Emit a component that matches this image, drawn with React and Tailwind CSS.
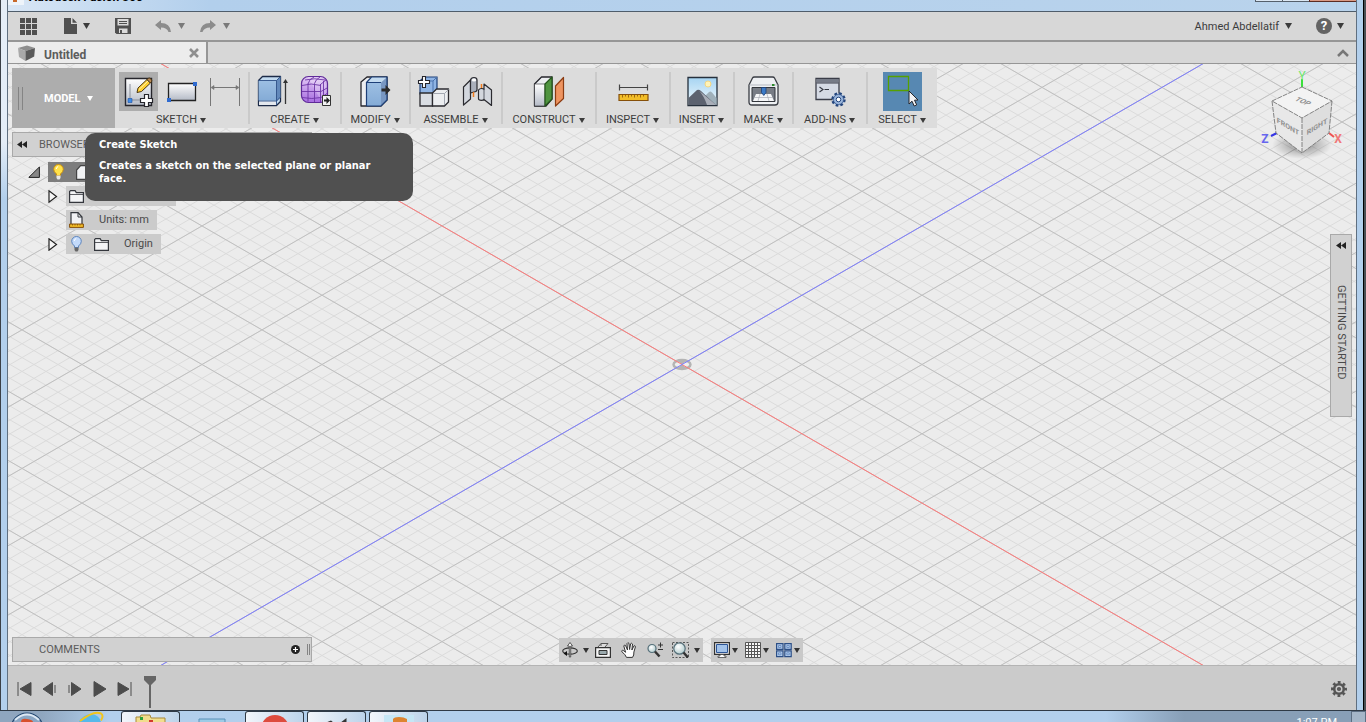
import { useState } from 'react'

const SLOPE = 34.641 / 60

const gridPath = (gap, count) => {
  let d = ''
  for (let k = -count; k <= count; k++) {
    const y = k * gap
    d += `M-1400 ${y - 1400 * SLOPE}L1400 ${y + 1400 * SLOPE}`
    d += `M-1400 ${y + 1400 * SLOPE}L1400 ${y - 1400 * SLOPE}`
  }
  return d
}

const minorGrid = gridPath(13.8564, 90)
const majorGrid = gridPath(69.282, 18)

const Caret = ({ className = 'w-[6px] h-[5px] text-[#3c3c3c]' }) => (
  <svg className={`shrink-0 ${className}`} viewBox="0 0 6 5" fill="currentColor">
    <path d="M0 0h6L3 5z" />
  </svg>
)

const Gradients = () => (
  <svg className="absolute w-0 h-0" aria-hidden="true">
    <defs>
      <linearGradient id="sheet" x1="0" y1="0" x2="0" y2="1">
        <stop offset="0" stopColor="#ffffff" />
        <stop offset="1" stopColor="#b4bac6" />
      </linearGradient>
      <linearGradient id="steel" x1="0" y1="0" x2="0" y2="1">
        <stop offset="0" stopColor="#9dbfe3" />
        <stop offset="1" stopColor="#84abd6" />
      </linearGradient>
      <linearGradient id="purple" x1="0" y1="0" x2="0" y2="1">
        <stop offset="0" stopColor="#e2c9f5" />
        <stop offset="1" stopColor="#a76ce0" />
      </linearGradient>
      <linearGradient id="sky" x1="0" y1="0" x2="0" y2="1">
        <stop offset="0" stopColor="#a6d4f2" />
        <stop offset="1" stopColor="#f2fafe" />
      </linearGradient>
      <radialGradient id="lens" cx=".4" cy=".35" r=".7">
        <stop offset="0" stopColor="#ffffff" />
        <stop offset="1" stopColor="#aec9cb" />
      </radialGradient>
    </defs>
  </svg>
)

/* toolbar drawings, all on a 39x39 tile */
const icons = {
  sketch: (
    <>
      <path d="M6.500 6.500h26v27h-26z" fill="url(#sheet)" stroke="#26262c" strokeWidth="1.400" />
      <path d="M11 12v16h14" fill="none" stroke="#8a8f99" />
      <path d="M9 26.500h4v4H9z" fill="#3d8be8" stroke="#1d4fa0" strokeWidth=".6" />
      <path d="M18 20.500l1-4.500 9-8.500 3.500 3.500-9 8.500z" fill="#ffd032" stroke="#4a3410" />
      <path d="M28 7.500l1.500-1.200q1-.6 1.800.2l1.300 1.500q.6 1-.2 1.800l-1 1.200z" fill="#b98a58" stroke="#4a3410" />
      <path d="M20 17.500l9-8.500" stroke="#fff3b0" />
      <path d="M25.500 22.500h4v4h4v4h-4v4h-4v-4h-4v-4h4z" fill="#fff" stroke="#26262c" strokeWidth="1.200" />
    </>
  ),
  rectangle: (
    <>
      <path d="M6.500 11.500h27v17h-27z" fill="url(#sheet)" stroke="#222" strokeWidth="1.300" />
      <path d="M31 10h4v4h-4zM5 26h4v4H5z" fill="#2f6bd0" />
    </>
  ),
  dimension: (
    <g stroke="#777" fill="#777">
      <path d="M5.500 6v28M34.500 6v28M7 15.500h26" />
      <path d="M6 15.500l3-2v4zM34 15.500l-3-2v4z" strokeWidth=".6" />
    </g>
  ),
  extrude: (
    <>
      <path d="M4.500 8.500l4-4h18v25l-4 4h-18z" fill="#c3dbf0" stroke="#1d2b48" strokeWidth="1.300" strokeLinejoin="round" />
      <path d="M4.500 8.500h18v20h-18z" fill="url(#steel)" />
      <path d="M22.500 8.500l4-4v21l-4 4z" fill="#6389bb" />
      <path d="M5 29h17.500v4H5z" fill="#e4e8ee" />
      <path d="M4.500 8.500h18v24.500M22.500 8.500l4-4M5 29h17.500l4-4" fill="none" stroke="#2e4f86" strokeWidth=".9" />
      <path d="M31.500 9v23" stroke="#333" strokeWidth="1.300" />
      <path d="M31.500 7l-2.500 4h5z" fill="#333" />
    </>
  ),
  form: (
    <>
      <rect x="4.500" y="4.500" width="26" height="26" rx="7" fill="url(#purple)" stroke="#5f2b98" strokeWidth="1.200" />
      <path d="M11 5.500q4 0 12 .5q6 4 6.500 9v10l-5 4.500" fill="#fff" opacity=".25" />
      <path d="M5 13.500q9-3 19 0M5 19.500h19M5 25.500q10 2 19 0M11 11.500v18M17.500 11.500v18.500M23.500 12v18M11 12q1-5 6-7M17.500 11.500q1-4 5.500-6.500M23.500 12.500l6-5M24 19.500l6-3.500M24 25.500l6-4M26.500 9v18M8 8q9-2.500 20 0" fill="none" stroke="#6d35a6" strokeWidth=".9" />
      <path d="M25.500 23.500h8v10h-8z" fill="#f2f2f2" stroke="#333" />
      <path d="M27 27.500h2.500V25l3.500 3.500-3.500 3.500v-2.500H27z" fill="#222" />
    </>
  ),
  pressPull: (
    <>
      <path d="M5 10l6-5h20v23l-6 6H5z" fill="#eceef1" stroke="#26262c" strokeWidth="1.300" strokeLinejoin="round" />
      <path d="M10.500 10.500l5-5.500H31l-6 5.500z" fill="#c3dbf0" />
      <path d="M10.500 10.500H25V34H10.500z" fill="url(#steel)" />
      <path d="M25 10.500L31 5v23l-6 6z" fill="#7897c2" />
      <path d="M10.500 34V10.500H25M10.500 10.500l5-5.500H31v23l-6 6H10.500" fill="none" stroke="#1d3f78" strokeWidth="1.200" />
      <path d="M25.500 16.500h4v-3.500l5 5-5 5v-3.500h-4z" fill="#2b2b2b" />
    </>
  ),
  component: (
    <>
      <path d="M5 9l4-4h13v13l-4 4H5z" fill="#8fb4e4" stroke="#1d3f78" strokeWidth="1.200" />
      <path d="M5 9h13v12M18 9l4-4" fill="none" stroke="#4b72ad" />
      <path d="M5 21h12.500v13H5z" fill="#d9dde3" stroke="#2b2b30" strokeWidth="1.300" />
      <path d="M17.500 21l4-4H33.500v13l-4 4h-12z" fill="#eceef1" stroke="#2b2b30" strokeWidth="1.300" strokeLinejoin="round" />
      <path d="M18 21.500h11.500V33M29.500 21.500l4-4" fill="none" stroke="#a3a8b2" />
      <path d="M7.500 4.500h3v4h4v3h-4v4h-3v-4h-4v-3h4z" fill="#fff" stroke="#26262c" strokeWidth="1.100" />
    </>
  ),
  joint: (
    <g strokeLinejoin="round">
      <path d="M5.500 15l7-7v19l-7 6z" fill="#d3d7de" stroke="#2b2b30" strokeWidth="1.200" />
      <path d="M12.500 8q.5-2.500 3.500-2.500t3 2.500v10q-.5 2-3 2l-3.500 1z" fill="#aab0bb" stroke="#2b2b30" strokeWidth="1.200" />
      <ellipse cx="16" cy="8" rx="2.200" ry="1.500" fill="#fff" />
      <path d="M15.500 20v5M23.500 12v5" stroke="#f07b1d" strokeWidth="1.500" />
      <path d="M20.500 18q1-1.500 3-1.500t2.500 1V12l7.500 6v15.500L26 27.500q-.8.800-2.500.8-3 0-3-1.500z" fill="#d3d7de" stroke="#2b2b30" strokeWidth="1.200" />
      <path d="M26 17v10" stroke="#5a5f69" />
    </g>
  ),
  plane: (
    <g strokeLinejoin="round">
      <path d="M4.500 12l7-7H22v22l-6 7H4.500z" fill="#eceef1" stroke="#26262c" strokeWidth="1.300" />
      <path d="M4.500 12H15v22H4.500z" fill="url(#sheet)" stroke="#26262c" strokeWidth=".6" />
      <path d="M15 12l7-7v22l-7 7z" fill="#4f9440" stroke="#24551c" strokeWidth="1.200" />
      <path d="M25.500 14l8-8.500v21l-8 7.500z" fill="#ee9460" stroke="#8c3c12" strokeWidth="1.200" />
    </g>
  ),
  measure: (
    <>
      <path d="M5.500 12.500v6M33.500 12.500v6M5.500 15.500h28" stroke="#444" strokeWidth="1.200" />
      <path d="M5 22.500h29v6H5z" fill="#f2bd27" stroke="#86500a" strokeWidth="1.200" />
      <path d="M8.500 23v2.500M11.500 23v1.500M14.500 23v2.500M17.500 23v1.500M20.500 23v2.500M23.500 23v1.500M26.500 23v2.500M29.500 23v1.500" stroke="#86500a" strokeWidth=".8" />
    </>
  ),
  image: (
    <>
      <path d="M5 5.500h29v28H5z" fill="url(#sky)" stroke="#26303c" strokeWidth="1.300" />
      <circle cx="25" cy="12" r="3" fill="#fff3b8" stroke="#f3d683" />
      <path d="M20 26l6-6q1.500-1 3 .5L33.500 26v7H22z" fill="#9fb0ba" />
      <path d="M5.500 26L14 18q2-1 4 1l15 14H5.500z" fill="#5c626f" />
      <path d="M16 18.500L33 33h-9q-3-9-8-14.500z" fill="#a9aeb8" />
    </>
  ),
  print: (
    <>
      <path d="M5 13l3.500-7Q9 5 10.500 5h18q1.500 0 2 1L34 13v17q0 3-3 3H8q-3 0-3-3z" fill="#eef0f3" stroke="#3a3d44" strokeWidth="1.300" />
      <path d="M5.500 13h28" stroke="#b5b9c1" />
      <path d="M8 15.500h23v14H8z" fill="#777c85" stroke="#33363c" />
      <path d="M12 22h15l3 7H9z" fill="#f5f6f8" />
      <path d="M10 25.500h19M16 22l-2 7M23 22l2 7" stroke="#a9adb6" strokeWidth=".7" />
      <path d="M17.500 15.500h4.500v5l-2.200 3-2.300-3z" fill="#3b7bc8" stroke="#1d3f78" strokeWidth=".8" />
      <path d="M28 12h2.500v2H28z" fill="#2a8a2a" />
    </>
  ),
  scripts: (
    <>
      <path d="M5 6.500h23v21H5z" fill="#d5dae4" stroke="#3a3d48" strokeWidth="1.300" />
      <path d="M5.500 7h22v3.500h-22z" fill="#767b87" />
      <path d="M5.500 11h22" stroke="#3a3d48" />
      <path d="M8.500 15l3.500 2.500L8.500 20M13.500 17.500h4.500" fill="none" stroke="#33363f" strokeWidth="1.100" />
      <circle cx="27.500" cy="27.500" r="6" fill="#9cb7dd" stroke="#24457c" strokeWidth="2.400" strokeDasharray="2.600 2.100" />
      <circle cx="27.500" cy="27.500" r="5" fill="#9cb7dd" stroke="#24457c" strokeWidth=".6" />
      <circle cx="27.500" cy="27.500" r="2.300" fill="#fff" stroke="#24457c" />
    </>
  ),
  select: (
    <>
      <path d="M5.500 4.500h20v14h-20z" fill="none" stroke="#56a000" strokeWidth="1.300" />
      <path d="M26 19v13l3-2.800 2.200 4.800 2.500-1.100-2.200-4.700 3.500-.2z" fill="#f2f3f5" stroke="#26262c" strokeLinejoin="round" />
    </>
  ),
}

const groups = [
  { label: 'SKETCH', width: 'w-[135px]', tools: [['sketch', 'Create Sketch'], ['rectangle', 'Rectangle'], ['dimension', 'Dimension']] },
  { label: 'CREATE', width: 'w-[92px]', tools: [['extrude', 'Extrude'], ['form', 'Create Form']] },
  { label: 'MODIFY', width: 'w-[69px]', tools: [['pressPull', 'Press Pull']] },
  { label: 'ASSEMBLE', width: 'w-[92px]', tools: [['component', 'New Component'], ['joint', 'Joint']] },
  { label: 'CONSTRUCT', width: 'w-[94px]', tools: [['plane', 'Offset Plane']] },
  { label: 'INSPECT', width: 'w-[74px]', tools: [['measure', 'Measure']] },
  { label: 'INSERT', width: 'w-[64px]', tools: [['image', 'Insert Image']] },
  { label: 'MAKE', width: 'w-[59px]', tools: [['print', '3D Print']] },
  { label: 'ADD-INS', width: 'w-[74px]', tools: [['scripts', 'Scripts']] },
  { label: 'SELECT', width: 'w-[69px]', tools: [['select', 'Select']] },
]

function TitleBar() {
  return (
    <div className="h-[11px] flex items-start justify-between overflow-hidden bg-linear-to-r from-[#d8e6f5] via-[#b2cfec] via-15% to-[#b9d3ec]">
      <div className="flex items-start">
        <svg className="w-4 h-[5px]" viewBox="0 0 16 5">
          <path d="M0 0h16v5H0z" fill="#eef4fa" />
          <path d="M5 0h4v2H5z" fill="#c8692a" />
        </svg>
        <span className="-mt-[11px] ml-[5px] text-[12px] leading-4 font-bold text-black">Autodesk Fusion 360</span>
      </div>
      <div className="flex">
        <span className="w-[27px] h-[2px] border-b border-l border-[#55606c] bg-[#dce8f4]" />
        <span className="w-[27px] h-[2px] border-b border-l border-[#55606c] bg-[#dce8f4]" />
        <span className="w-[47px] h-[2px] border-b border-l border-[#5c2c22] bg-[#d99a86]" />
      </div>
    </div>
  )
}

function AppBar() {
  return (
    <header className="h-[31px] flex items-center justify-between border-t border-[#4f5d6b] border-b-2 border-b-[#969696] bg-[#d7d7d7] px-3">
      <div className="flex items-center text-[#505050]">
        <button type="button" aria-label="Data Panel">
          <svg className="w-[17px] h-[17px]" viewBox="0 0 17 17" fill="currentColor">
            <path d="M0 0h5v5H0zM6 0h5v5H6zM12 0h5v5h-5zM0 6h5v5H0zM6 6h5v5H6zM12 6h5v5h-5zM0 12h5v5H0zM6 12h5v5H6zM12 12h5v5h-5z" />
          </svg>
        </button>
        <button type="button" aria-label="File" className="ml-[27px] flex items-center gap-[6px]">
          <svg className="w-[13px] h-4" viewBox="0 0 13 16" fill="currentColor">
            <path d="M0 0h7v6h6v10H0zM8.500 0L13 4.800H8.500z" />
          </svg>
          <Caret className="w-[7px] h-[6px] text-[#3c3c3c]" />
        </button>
        <button type="button" aria-label="Save" className="ml-[25px]">
          <svg className="w-4 h-4" viewBox="0 0 16 16">
            <path d="M0 0h16v16H1.500L0 14.500z" fill="currentColor" />
            <path d="M2.500 1h11v6.500h-11zM4 10.500h8.500V15H4z" fill="#dadada" />
            <path d="M4 3h8v1H4zM4 5h8v1H4zM5 12h2v3H5z" fill="currentColor" />
          </svg>
        </button>
        <button type="button" aria-label="Undo" className="ml-6 flex items-center gap-[7px] text-[#8c8c8c]">
          <svg className="w-4 h-3" viewBox="0 0 16 12" fill="currentColor">
            <path d="M0 5L6 0v3q9 0 10 9h-2.500q-1.500-4.500-7.500-4.500V10z" />
          </svg>
          <Caret className="w-[7px] h-[6px] text-[#7a7a7a]" />
        </button>
        <button type="button" aria-label="Redo" className="ml-[15px] flex items-center gap-[7px] text-[#8c8c8c]">
          <svg className="w-4 h-3" viewBox="0 0 16 12" fill="currentColor">
            <path d="M16 5l-6-5v3Q1 3 0 12h2.500Q4 7.500 10 7.500V10z" />
          </svg>
          <Caret className="w-[7px] h-[6px] text-[#7a7a7a]" />
        </button>
      </div>
      <div className="flex items-center text-[#3c3c3c]">
        <button type="button" className="flex items-center gap-[6px] text-[11px] leading-4">
          <span className="pt-[2px]">Ahmed Abdellatif</span>
          <Caret className="w-[7px] h-[6px]" />
        </button>
        <button type="button" aria-label="Help" className="ml-6 flex items-center gap-[5px]">
          <span className="w-4 h-4 rounded-full bg-[#636363] text-white text-[13px] leading-4 font-bold text-center">?</span>
          <Caret className="w-[7px] h-[6px]" />
        </button>
      </div>
    </header>
  )
}

function TabBar() {
  return (
    <div className="h-[22px] flex items-stretch justify-between bg-[#d7d7d7] border-b border-[#969696]">
      <div className="w-[200px] flex items-center pl-[10px] pr-[7px] bg-[#ececec] border-r-2 border-[#969696]">
        <svg className="w-[17px] h-4" viewBox="0 0 17 16">
          <path d="M0 3L9 .5 17 3 7.500 6z" fill="#8e8e8e" />
          <path d="M0 3l7.500 3v10L1 12z" fill="#a9a9a9" />
          <path d="M7.500 6L17 3l-.8 8.500-8.700 4.500z" fill="#5a5a5a" />
        </svg>
        <span className="ml-[9px] pt-1 flex-1 text-[12px] leading-4 font-bold text-[#5c5c5c]">Untitled</span>
        <button type="button" aria-label="Close tab">
          <svg className="w-[10px] h-[10px]" viewBox="0 0 10 10" stroke="#8f8f8f" strokeWidth="2.600">
            <path d="M1 1l8 8M9 1L1 9" />
          </svg>
        </button>
      </div>
      <button type="button" aria-label="Collapse toolbar" className="mr-[7px]">
        <svg className="w-3 h-2" viewBox="0 0 12 8" fill="none" stroke="#777" strokeWidth="2.500">
          <path d="M1 7l5-5 5 5" />
        </svg>
      </button>
    </div>
  )
}

function Toolbar({ active, onPick }) {
  return (
    <div className="self-start ml-1 mt-1 h-[60px] flex bg-[#dcdcdc]">
      <button type="button" className="w-[103px] flex items-center bg-[#adadad] pl-[6px] text-[11px] leading-4 font-bold text-white">
        <span className="w-[5px] h-[23px] border-x border-[#848484]" />
        <span className="ml-[21px] mr-[6px] pt-[2px]">MODEL</span>
        <Caret className="w-[6px] h-[5px] text-white" />
      </button>
      {groups.map((group, i) => (
        <div
          key={group.label}
          className={`${group.width} my-1 flex flex-col items-center ${i < groups.length - 1 ? 'border-r-2 border-[#cacaca]' : ''}`}
        >
          <div className="flex gap-1">
            {group.tools.map(([icon, label]) => (
              <button
                key={icon}
                type="button"
                aria-label={label}
                onClick={() => onPick(icon)}
                className={`w-[39px] h-[39px] ${active === icon ? 'bg-[#adadad]' : ''} ${icon === 'select' ? 'bg-[#5788b2]' : ''}`}
              >
                <svg className="w-[39px] h-[39px]" viewBox="0 0 39 39">{icons[icon]}</svg>
              </button>
            ))}
          </div>
          <button type="button" className="flex items-center gap-[3px] pr-px text-[11px] leading-[18px] text-[#3c3c3c]">
            {group.label}
            <Caret />
          </button>
        </div>
      ))}
    </div>
  )
}

const Bulb = ({ on }) => (
  <svg className="w-[11px] h-4" viewBox="0 0 11 16">
    <path d="M3.500 10Q.7 8 .7 5.300a4.800 4.800 0 0 1 9.600 0Q10.300 8 7.500 10v1.500h-4z" fill={on ? '#ffe14a' : '#c3dafa'} stroke={on ? '#c98f10' : '#5c84bd'} />
    <path d="M3.500 11.500h4v2.500l-1 1.500h-2l-1-1.500z" fill={on ? '#e8e8e8' : '#666'} />
    <path d="M3.200 5q.3-2 2-2.500" fill="none" stroke="#fff" />
  </svg>
)

const Folder = () => (
  <svg className="w-[15px] h-[13px]" viewBox="0 0 15 13">
    <path d="M.6 12.400V1.600l1-1h4.500l1.200 2h7.100v9.800z" fill="#f3f4f6" stroke="#33363c" strokeWidth="1.200" />
    <path d="M1 4.500h13.400" stroke="#33363c" strokeWidth=".8" />
  </svg>
)

const Expander = () => (
  <svg className="w-[10px] h-[13px]" viewBox="0 0 10 13">
    <path d="M1 .8v11.400l7.500-5.700z" fill="#f5f5f5" stroke="#222" strokeWidth="1.200" />
  </svg>
)

function Browser() {
  return (
    <section className="ml-1 mt-1 w-[300px] text-[11px] leading-4 text-[#4a4a4a]">
      <h2 className="h-[25px] flex items-center gap-3 px-1 bg-[#d1d1d1] border border-[#a9a9a9]">
        <svg className="w-[10px] h-[7px]" viewBox="0 0 10 7" fill="#222">
          <path d="M5 0v7L0 3.500zM10 0v7L5 3.500z" />
        </svg>
        <span className="text-[#5c5c5c]">BROWSER</span>
      </h2>
      <ul className="mt-[5px] flex flex-col gap-1">
        <li className="pl-4 flex items-center gap-2">
          <svg className="w-3 h-3" viewBox="0 0 12 12">
            <path d="M11.400 1v10.400H.8z" fill="#888" stroke="#222" />
          </svg>
          <div className="h-5 w-[140px] flex items-center gap-3 pl-[5px] bg-[#7d7d7d]">
            <Bulb on />
            <svg className="w-4 h-[15px]" viewBox="0 0 16 15">
              <path d="M.6 14.400V5l4-4.400h11v13.800z" fill="#f1f2f4" stroke="#444" strokeWidth="1.200" />
            </svg>
          </div>
        </li>
        <li className="pl-9 flex items-center gap-2">
          <Expander />
          <div className="h-5 w-[110px] flex items-center pl-[3px] bg-[#cbcbcb]">
            <Folder />
          </div>
        </li>
        <li className="pl-[54px] flex">
          <div className="h-5 flex items-center gap-[15px] pl-[3px] pr-2 bg-[#cbcbcb]">
            <svg className="w-[15px] h-4" viewBox="0 0 15 16">
              <path d="M2 13V.6h7L13 5v8" fill="#f1f2f4" stroke="#33363c" strokeWidth="1.200" />
              <path d="M9 .6V5h4" fill="none" stroke="#33363c" />
              <path d="M.6 12h13.800v3.400H.6z" fill="#f2bd27" stroke="#86500a" />
              <path d="M3.500 12v1.500M6 12v1.500M8.500 12v1.500M11 12v1.500" stroke="#86500a" strokeWidth=".8" />
            </svg>
            Units: mm
          </div>
        </li>
        <li className="pl-9 flex items-center gap-2">
          <Expander />
          <div className="h-5 flex items-center pl-[5px] pr-2 bg-[#cbcbcb]">
            <Bulb />
            <span className="ml-3 mr-[15px]"><Folder /></span>
            Origin
          </div>
        </li>
      </ul>
    </section>
  )
}

function ViewCube() {
  return (
    <svg className="w-[90px] h-24" viewBox="0 0 90 96">
      <defs>
        <radialGradient id="shade">
          <stop offset="0" stopColor="#000" stopOpacity=".4" />
          <stop offset="1" stopColor="#000" stopOpacity="0" />
        </radialGradient>
      </defs>
      <ellipse cx="46" cy="77" rx="30" ry="14" fill="url(#shade)" />
      <path d="M46 11v8" stroke="#3be03b" strokeWidth="2" />
      <path d="M15 68l6-3" stroke="#3434e6" strokeWidth="2" />
      <path d="M73 65l5 4" stroke="#ee5252" strokeWidth="2" />
      <path d="M46 19l30 14-30 17-30-17z" fill="#f3f3f3" />
      <path d="M16 33l30 17v35L20 65z" fill="#e8e8e8" />
      <path d="M76 33L46 50v35l27-20z" fill="#dedede" />
      <path d="M46 19l30 14-30 17-30-17zM16 33l4 32 26 20 27-20 3-32M46 50v35" fill="none" stroke="#777" strokeWidth=".9" strokeDasharray="5 1" />
      <g fontWeight="bold" fill="#8f8f8f" textAnchor="middle">
        <text transform="matrix(.9 .35 -.75 .6 45 35)" fontSize="8">TOP</text>
        <text transform="translate(32 61) skewY(31)" fontSize="7">FRONT</text>
        <text transform="translate(61 61) skewY(-31)" fontSize="7">RIGHT</text>
      </g>
      <g fontSize="12" textAnchor="middle">
        <text x="46" y="12" fill="#6fe86f">Y</text>
        <text x="9" y="75" fill="#6666ee" fontWeight="bold">Z</text>
        <text x="82" y="75" fill="#f07878" fontWeight="bold">X</text>
      </g>
    </svg>
  )
}

function NavBar() {
  const caret = <Caret className="w-[6px] h-[5px] text-[#333]" />
  return (
    <nav className="flex gap-2 pr-[2px]" aria-label="Navigation">
      <div className="h-6 flex items-center px-[3px] bg-[#c9c9c9]">
        <button type="button" aria-label="Orbit" className="flex items-center gap-[5px]">
          <svg className="w-4 h-4" viewBox="0 0 16 16">
            <ellipse cx="8" cy="9" rx="7.300" ry="3.200" fill="none" stroke="#333" strokeWidth="1.200" />
            <path d="M7.300 15V4H5.500L8 .5 10.500 4H8.700v11z" fill="#fff" stroke="#333" strokeWidth=".8" />
            <path d="M1.500 11.500L5 9v5z" fill="#111" />
          </svg>
          {caret}
        </button>
        <button type="button" aria-label="Look At" className="ml-[6px]">
          <svg className="w-4 h-4" viewBox="0 0 16 16">
            <path d="M3 5l3-3.500h7L10 5M6 1.500V4" fill="#ddd" stroke="#555" />
            <path d="M.6 5.600h14.800v9.800H.6z" fill="#f6f6f6" stroke="#333" strokeWidth="1.200" />
            <path d="M4 8.500h8v4H4z" fill="#9aa9ad" stroke="#333" />
          </svg>
        </button>
        <button type="button" aria-label="Pan" className="ml-[10px]">
          <svg className="w-4 h-4" viewBox="0 0 16 16">
            <path d="M5.500 15.400Q4.500 12.800 1 9.800q-.8-1.200.6-1.500 1 0 3 2L2.800 4q.4-1.500 1.700-.6L6.500 8 6 1.600Q6.800 0 7.900 1.300L8.600 7.500l1-5.700Q10.800.6 11.500 2l-.6 6 2-4q1.300-.8 1.600.5L12.900 10q.3 3.300-1.400 5.400z" fill="#fff" stroke="#333" />
          </svg>
        </button>
        <button type="button" aria-label="Zoom" className="ml-[10px]">
          <svg className="w-4 h-4" viewBox="0 0 16 16">
            <circle cx="5" cy="6.500" r="4" fill="url(#lens)" stroke="#56707a" strokeWidth="1.200" />
            <path d="M8 9.500l4.500 5" stroke="#333" strokeWidth="2.500" />
            <path d="M13.500.5v5M11 3h5M11 7.500h5" stroke="#333" />
          </svg>
        </button>
        <button type="button" aria-label="Fit" className="ml-[9px] flex items-center gap-[5px]">
          <svg className="w-[17px] h-4" viewBox="0 0 17 16">
            <path d="M.5.5h16v15H.5z" fill="none" stroke="#555" strokeDasharray="2 1.500" />
            <circle cx="7.500" cy="6.500" r="5.700" fill="url(#lens)" stroke="#56707a" strokeWidth="1.200" />
            <path d="M11.500 10.500l4.500 5" stroke="#333" strokeWidth="2.500" />
          </svg>
          {caret}
        </button>
      </div>
      <div className="h-6 flex items-center gap-[7px] px-[3px] bg-[#c9c9c9]">
        <button type="button" aria-label="Display Settings" className="flex items-center gap-[2px]">
          <svg className="w-4 h-4" viewBox="0 0 16 16">
            <path d="M.6.6h14.800v11.800H.6z" fill="#f6f6f6" stroke="#333" strokeWidth="1.200" />
            <path d="M2.500 2.500h11v8h-11z" fill="#a3c3ea" stroke="#2c5596" />
            <path d="M6 12.500h4v1.500h2v1.500H4V14h2z" fill="#fff" stroke="#333" strokeWidth=".7" />
          </svg>
          {caret}
        </button>
        <button type="button" aria-label="Grid and Snaps" className="flex items-center gap-[2px]">
          <svg className="w-4 h-4" viewBox="0 0 16 16">
            <path d="M.5.5h15v15H.5z" fill="#f6f6f6" />
            <path d="M.5.5h15v15H.5zM3.500 0v16M6.500 0v16M9.500 0v16M12.500 0v16M0 3.500h16M0 6.500h16M0 9.500h16M0 12.500h16" fill="none" stroke="#555" />
          </svg>
          {caret}
        </button>
        <button type="button" aria-label="Viewports" className="flex items-center gap-[2px]">
          <svg className="w-4 h-4" viewBox="0 0 16 16">
            <path d="M.6 1.600h6.400v5.800H.6zM8.800 1.600h6.400v5.800H8.800zM.6 8.800h6.400v5.800H.6zM8.800 8.800h6.400v5.800H8.800z" fill="#b4cdee" stroke="#2c4f86" strokeWidth="1.200" />
            <path d="M2.500 3.500h2.500v2H2.500zM10.800 3.500h2.500v2h-2.500zM2.500 10.800h2.500v2H2.500zM10.800 10.800h2.500v2h-2.500z" fill="none" stroke="#5f86bd" strokeWidth=".8" />
          </svg>
          {caret}
        </button>
      </div>
    </nav>
  )
}

function Canvas() {
  const [active, setActive] = useState('sketch')

  return (
    <main className="relative flex-1 flex flex-col overflow-hidden bg-[#ececec]">
      <svg className="absolute inset-0 w-full h-full" aria-hidden="true">
        <svg x="50%" y="50%" overflow="visible">
          <path d={minorGrid} stroke="#dbdbdb" />
          <path d={majorGrid} stroke="#c0c0c0" />
          <ellipse cx="0" cy="0" rx="8.500" ry="4.500" fill="#efefef" stroke="#b4b4b4" strokeWidth="2.500" />
          <path d="M-6-4.500H6L0 0l6 4.500H-6L0 0z" fill="#b4b4b4" />
          <path d="M-1400-808.300L1400 808.300" stroke="#ff7a7a" />
          <path d="M-1400 808.300L1400-808.300" stroke="#7d7dff" />
        </svg>
      </svg>

      <div className="relative flex-1 flex justify-between">
        <div className="flex flex-col">
          <Toolbar active={active} onPick={setActive} />
          <Browser />
        </div>
        <aside className="flex flex-col items-end pt-1 pr-1">
          <div className="pr-[6px]">
            <ViewCube />
          </div>
          <button
            type="button"
            className="mt-[70px] w-[22px] h-[183px] flex flex-col items-center pt-[7px] bg-[#d1d1d1] border border-[#a9a9a9] text-[11px] leading-4 text-[#4a4a4a]"
          >
            <svg className="w-[10px] h-[7px]" viewBox="0 0 10 7" fill="#222">
              <path d="M5 0v7L0 3.500zM10 0v7L5 3.500z" />
            </svg>
            <span className="mt-9 [writing-mode:vertical-rl]">GETTING STARTED</span>
          </button>
        </aside>
      </div>

      <div className="relative grid grid-cols-[1fr_auto_1fr] items-end pb-[3px]">
        <section className="ml-1 w-[300px] h-[25px] flex items-center pl-[26px] pr-px bg-[#d1d1d1] border border-[#a9a9a9]">
          <h2 className="flex-1 text-[11px] leading-4 text-[#5c5c5c]">COMMENTS</h2>
          <button type="button" aria-label="Add comment">
            <svg className="w-[9px] h-[9px]" viewBox="0 0 9 9">
              <circle cx="4.500" cy="4.500" r="4.500" fill="#222" />
              <path d="M4.500 2v5M2 4.500h5" stroke="#fff" strokeWidth="1.200" />
            </svg>
          </button>
          <span className="ml-[7px] w-[3px] h-[11px] border-x border-[#848484]" />
        </section>
        <NavBar />
      </div>

      <div
        role="tooltip"
        className="absolute left-[77px] top-[69px] w-[328px] h-[68px] rounded-[10px] bg-[#505050] px-[14px] pt-[5px] font-['DejaVu_Sans_Condensed','DejaVu_Sans',sans-serif] text-[11px] leading-[13px] font-bold text-white"
      >
        <p>Create Sketch</p>
        <p className="mt-2">Creates a sketch on the selected plane or planar face.</p>
      </div>
    </main>
  )
}

const playback = [
  ['Go to start', 'M1 1v14M14 1.500v13L3 8z'],
  ['Step back', 'M13 4v8M10.500 1.500v13L1 8z'],
  ['Step forward', 'M2 4v8M4.500 1.500v13L14 8z'],
  ['Play', 'M2 .5v15L14 8z'],
  ['Go to end', 'M14 1v14M1 1.500v13L12 8z'],
]

function Timeline() {
  return (
    <footer className="h-[45px] flex items-center pt-[2px] pl-[9px] pr-[9px] border-t border-[#b4b4b4] bg-[#cbcbcb] text-[#4c4c4c]">
      <div className="flex gap-[10px]">
        {playback.map(([label, d]) => (
          <button key={label} type="button" aria-label={label}>
            <svg className="w-[15px] h-4" viewBox="0 0 15 16" fill="currentColor" stroke="currentColor" strokeWidth="1">
              <path d={d} />
            </svg>
          </button>
        ))}
      </div>
      <svg className="ml-3 mt-[5px] w-3 h-8" viewBox="0 0 12 32" fill="#666">
        <path d="M0 0h12v4L7 9v23H5V9L0 4z" />
      </svg>
      <button type="button" aria-label="Timeline settings" className="ml-auto">
        <svg className="w-4 h-4" viewBox="0 0 16 16" fill="none" stroke="#555">
          <circle cx="8" cy="8" r="6.700" strokeWidth="2.600" strokeDasharray="2.800 2.460" strokeDashoffset="1.400" />
          <circle cx="8" cy="8" r="4.800" strokeWidth="2.600" />
          <circle cx="8" cy="8" r="1.200" strokeWidth="1.800" />
        </svg>
      </button>
    </footer>
  )
}

const taskButton = 'w-[59px] h-3 flex justify-center rounded-t-[3px] border-t border-x border-[#2f3a46] bg-linear-to-r from-[#f2f6fb] to-[#bcd3ea]'

function Taskbar() {
  return (
    <div className="h-3 flex items-start overflow-hidden border-t border-[#2f3a46] bg-linear-to-r from-[#8fa6bf] from-3% via-[#b2cfec] via-8% to-[#b2cfec]">
      <svg className="ml-[10px] w-[34px] h-[11px]" viewBox="0 0 34 11">
        <circle cx="17" cy="18" r="16" fill="#8ba6c3" stroke="#20456e" strokeWidth="1.200" />
        <path d="M5 9q12-11 24 0" fill="none" stroke="#dce8f4" strokeWidth="2" />
        <path d="M11 11q0-4 6-3t6 3z" fill="#d8502c" />
      </svg>
      <svg className="ml-[33px] w-7 h-[11px]" viewBox="0 0 28 11">
        <path d="M2 11q4-8 13-8 7 1 9 8z" fill="#58b9ea" />
        <path d="M3 10Q17-1 24 2.500q3 2 0 7" fill="none" stroke="#f2c51c" strokeWidth="2" />
      </svg>
      <span className={`ml-4 ${taskButton}`}>
        <svg className="w-8 h-[11px]" viewBox="0 0 32 11">
          <path d="M1 11V5h4l1-2h9l1 3h14v5z" fill="#f1dd8c" stroke="#a8893a" />
          <path d="M5 5h3v3H5z" fill="#2ca33c" />
          <path d="M14 8h4v3h-4z" fill="#d23a2a" />
        </svg>
      </span>
      <svg className="ml-[18px] w-7 h-[11px]" viewBox="0 0 28 11">
        <path d="M1 11V8h26v3" fill="#9ccbe6" stroke="#5a91b8" />
      </svg>
      <span className={`ml-[19px] ${taskButton}`}>
        <svg className="w-7 h-[11px]" viewBox="0 0 28 11">
          <circle cx="14" cy="17" r="14" fill="#dd4b3e" />
        </svg>
      </span>
      <span className={`ml-[3px] ${taskButton}`}>
        <svg className="w-7 h-[11px]" viewBox="0 0 28 11" fill="#333">
          <path d="M2 11l6-2.500 3 2.500zM17 11l6.500-5v5z" />
        </svg>
      </span>
      <span className={`ml-[3px] ${taskButton}`}>
        <svg className="w-[30px] h-[11px]" viewBox="0 0 30 11">
          <path d="M0 3h30v8H0z" fill="#c5e6f5" />
          <path d="M9 11V7q1-2 6-2t8 2v4z" fill="#dd8430" />
        </svg>
      </span>
      <div className="ml-auto w-[260px] h-3 flex justify-end bg-linear-to-r from-[#b2cfec] to-[#889fb7] to-30%">
        <time className="mt-1 mr-[14px] text-[11px] leading-4 text-white">1:07 PM</time>
        <span className="w-[15px] h-3 border border-[#5d6f83] bg-[#a5b6c8]" />
      </div>
    </div>
  )
}

export default function App() {
  return (
    <div className="min-h-screen flex flex-col overflow-hidden font-[Roboto,'Liberation_Sans',sans-serif]">
      <Gradients />
      <div className="flex-1 flex">
        <div className="w-2 border-l border-r border-l-[#3a3f46] border-r-[#5f6f80] bg-linear-to-b from-[#e4edf7] from-20% to-[#b2cfec] to-28%" />
        <div className="flex-1 flex flex-col">
          <TitleBar />
          <AppBar />
          <TabBar />
          <Canvas />
          <Timeline />
        </div>
        <div className="w-[7px] border-l border-[#5f6f80] bg-[#b2cfec]" />
        <div className="w-[3px] border-l border-black bg-[#4a4f54]" />
      </div>
      <Taskbar />
    </div>
  )
}
